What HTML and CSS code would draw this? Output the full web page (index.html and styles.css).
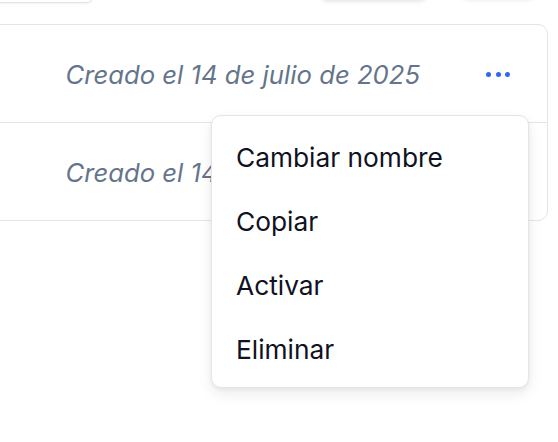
FILE: index.html
```html
<!DOCTYPE html>
<html lang="es">
<head>
<meta charset="utf-8">
<title>Proyectos</title>
<link rel="stylesheet" href="styles.css">
</head>
<body>
<div class="page">
  <div class="toolbar">
    <div class="search"></div>
    <div class="tools">
      <div class="btn btn-shadow"></div>
      <div class="btn btn-plain"></div>
    </div>
  </div>
  <div class="card">
    <div class="row">
      <span class="date">Creado el 14 de julio de 2025</span>
      <button class="more" aria-label="Más opciones">
        <span class="dot"></span><span class="dot"></span><span class="dot"></span>
      </button>
    </div>
    <div class="row">
      <span class="date">Creado el 14 de julio de 2025</span>
      <button class="more" aria-label="Más opciones">
        <span class="dot"></span><span class="dot"></span><span class="dot"></span>
      </button>
    </div>
  </div>
  <ul class="menu">
    <li>Cambiar nombre</li>
    <li>Copiar</li>
    <li>Activar</li>
    <li>Eliminar</li>
  </ul>
</div>
</body>
</html>
```
FILE: styles.css
```css
* { box-sizing: border-box; }
html, body { margin: 0; padding: 0; background: #ffffff; }
body {
  font-family: Inter, "Noto Sans", sans-serif;
  width: 558px;
  height: 442px;
  overflow: hidden;
}
.page { position: relative; display: flow-root; height: 442px; }

.toolbar {
  display: flex;
  justify-content: space-between;
  align-items: flex-end;
  margin-top: -40px;
  height: 43px;
  padding-right: 23px;
}
.search {
  width: 104px;
  height: 43px;
  margin-left: -10px;
  border: 1px solid #e2e5eb;
  border-radius: 8px;
  box-shadow: 0 1px 2px rgba(15, 23, 42, 0.06);
}
.tools { display: flex; gap: 33px; align-items: flex-end; }
.btn { height: 40px; margin-bottom: 4px; border-radius: 8px; background: #fff; }
.btn-shadow { width: 107px; box-shadow: 0 2px 5px rgba(15, 23, 42, 0.14); }
.btn-plain { width: 75px; box-shadow: 0 1px 4px rgba(15, 23, 42, 0.1); }

.card {
  margin-top: 21px;
  margin-left: -20px;
  width: 568px;
  border: 1px solid #e4e4ea;
  border-radius: 10px;
  background: #fff;
}
.row {
  display: flex;
  align-items: center;
  justify-content: flex-end;
  height: 97px;
  padding-right: 37px;
  gap: 66px;
}
.row + .row { border-top: 1px solid #e4e4ea; height: 98px; }
.date {
  font-style: italic;
  font-size: 25.7px;
  color: #64748b;
  margin-top: 2px;
}
.more {
  display: flex;
  gap: 4.5px;
  padding: 0;
  border: 0;
  background: none;
  margin-top: 2px;
}
.dot {
  width: 5px;
  height: 5px;
  border-radius: 50%;
  background: #2f66f6;
}

.menu {
  position: absolute;
  left: 211px;
  top: 115px;
  width: 318px;
  margin: 0;
  padding: 18px 0 0;
  list-style: none;
  background: #fff;
  border: 1px solid #e4e4ea;
  border-radius: 10px;
  box-shadow: 0 6px 14px rgba(15, 23, 42, 0.08), 0 2px 4px rgba(15, 23, 42, 0.05);
}
.menu li {
  height: 64px;
  padding-left: 24px;
  font-size: 26.3px;
  line-height: 48px;
  color: #0f1222;
}
.menu li:last-child { height: 61px; }
```
